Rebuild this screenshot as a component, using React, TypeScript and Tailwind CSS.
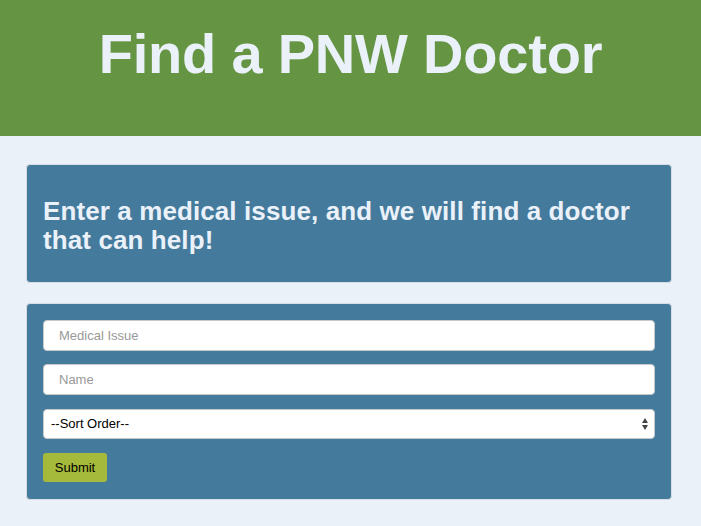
import { useState } from "react";

export default function App() {
    const [issue, setIssue] = useState("");
    const [name, setName] = useState("");
    const [sort, setSort] = useState("");

    return (
        <div className="min-h-[526px] bg-[#eaf1f9] font-['Liberation_Sans',Arial,sans-serif]">
            <header className="h-[136px] bg-[#659443] flex justify-center pt-[18px]">
                <h1 className="text-[56px] font-bold leading-[72px] text-[#eaf1f9] tracking-[-0.2px]">Find a PNW Doctor</h1>
            </header>

            <main className="pl-[26px] pr-[29px] pt-[28px] flex flex-col gap-[20px]">
                <section className="h-[119px] bg-[#447a9c] border border-[#d6dde3] rounded-[4px] px-[16px] pt-[32px]">
                    <h2 className="text-[26px] font-bold leading-[29px] text-[#eaf1f9] tracking-[0.1px]">
                        Enter a medical issue, and we will find a doctor that can help!
                    </h2>
                </section>

                <section className="bg-[#447a9c] border border-[#d6dde3] rounded-[4px] px-[16px] pt-[16px] pb-[17px]">
                    <form className="flex flex-col" onSubmit={(e) => e.preventDefault()}>
                        <input
                            value={issue}
                            onChange={(e) => setIssue(e.target.value)}
                            placeholder="Medical Issue"
                            className="h-[31px] bg-white border border-[#c8c8c8] rounded-[4px] px-[15px] text-[13px] text-black placeholder:text-[#999]"
                        />
                        <input
                            value={name}
                            onChange={(e) => setName(e.target.value)}
                            placeholder="Name"
                            className="mt-[13px] h-[31px] bg-white border border-[#c8c8c8] rounded-[4px] px-[15px] text-[13px] text-black placeholder:text-[#999]"
                        />
                        <div className="relative mt-[14px]">
                            <select
                                value={sort}
                                onChange={(e) => setSort(e.target.value)}
                                className="w-full h-[30px] appearance-none bg-white border border-[#c8c8c8] rounded-[4px] pl-[7px] pr-[24px] text-[13px] text-black"
                            >
                                <option value="">--Sort Order--</option>
                                <option value="name">Name</option>
                                <option value="distance">Distance</option>
                            </select>
                            <svg className="absolute right-[6px] top-[8px] pointer-events-none" width="8" height="14" viewBox="0 0 8 14">
                                <path d="M4 1 L7 6 L1 6 Z" fill="#444" />
                                <path d="M4 13 L7 8 L1 8 Z" fill="#444" />
                            </svg>
                        </div>
                        <div className="mt-[14px]">
                            <button type="submit" className="h-[29px] w-[64px] bg-[#a5b93b] rounded-[3px] text-[13px] text-black">
                                Submit
                            </button>
                        </div>
                    </form>
                </section>
            </main>
        </div>
    );
}
